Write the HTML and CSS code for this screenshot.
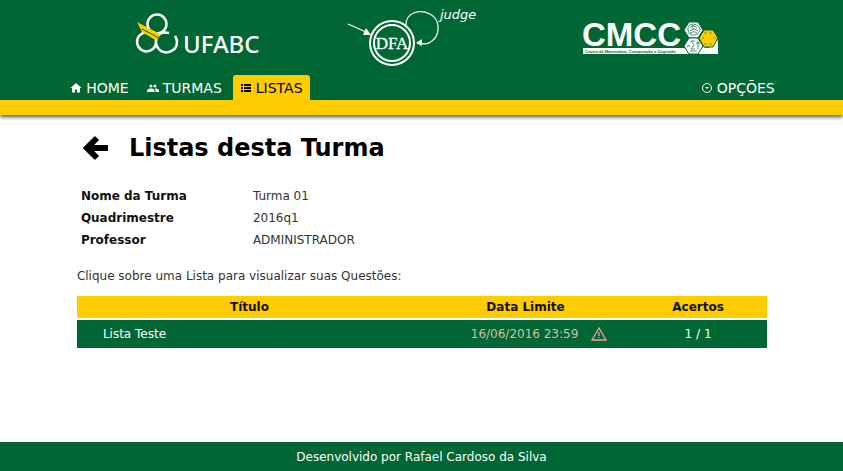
FILE: index.html
```html
<!DOCTYPE html>
<html lang="pt-BR">
<head>
<meta charset="utf-8">
<meta name="viewport" content="width=device-width, initial-scale=1">
<title>DFA judge - Listas</title>
<link rel="stylesheet" href="styles.css">
</head>
<body>
<header class="header">
  <div class="logos">
    <svg class="logo" width="128" height="51" viewBox="0 0 128 51" role="img" aria-label="UFABC">
      <g fill="none" stroke="#fff" stroke-width="2.500">
        <circle cx="23" cy="12" r="9.500"/>
        <path d="M16 21A9.500 9.500 0 1 0 22 31"/>
        <path d="M35 21C24 18 19 28 24 36C30 44 43 40 43 30Q43 27 41 24"/>
      </g>
      <path d="M3 10L26 22L23 29L8 20Z" fill="#fc0"/>
      <path d="M8 17L25 26" stroke="#063" stroke-width="1"/>
      <text class="ufabc" x="49" y="41">UFABC</text>
    </svg>
    <svg class="logo" width="157" height="68" viewBox="0 0 157 68" role="img" aria-label="DFA judge">
      <g fill="none" stroke="#fff">
        <circle cx="48" cy="39" r="22" stroke-width="2"/>
        <circle cx="48" cy="39" r="18" stroke-width="2"/>
        <path d="M4 20L22 28M62 21C62 8 76 5 86 10C97 16 96 31 88 37C83 41 79 40 74 39" stroke-width="1.200"/>
      </g>
      <path d="M27 31L19 31L22 24ZM72 39L78 35V42Z" fill="#fff"/>
      <text class="dfa" x="48" y="45">DFA</text>
      <text class="judge" x="96" y="15">judge</text>
    </svg>
    <svg class="logo" width="136" height="35" viewBox="0 0 136 35" role="img" aria-label="CMCC">
      <text class="cmcc" x="-1" y="26">CMCC</text>
      <path d="M0 28H101L110 32L120 27L125 28L135 20V34H0Z" fill="#fff"/>
      <text class="cmcc-sub" x="2" y="33">Centro de Matemática, Computação e Cognição</text>
      <g stroke="#063" stroke-width="1">
        <path d="M106 2H115L120 10L115 18H106L101 10Z" fill="#fff"/>
        <path d="M106 18H115L120 26L115 34H106L101 26Z" fill="#fff"/>
        <path d="M121 10H130L135 18L130 27H121L116 18Z" fill="#fc0"/>
      </g>
      <g fill="none" stroke="#063" stroke-width=".7">
        <path d="M105 10Q104 5 110 4Q117 5 117 10Q115 16 109 15Q105 14 105 10M107 8Q110 4 114 8M107 11Q111 7 115 11M107 13Q111 10 114 13M110 5V9"/>
        <path d="M104 27L106 25L107 27M112 21H108L111 25L108 29H112M113 23H117M115 21V29M107 31H114"/>
        <path d="M121 13H124M126 13H129M130 18H133M121 24H124M126 24H129M119 18H121" stroke-opacity=".7"/>
      </g>
    </svg>
  </div>
  <nav class="nav" aria-label="Principal">
    <a class="tab" href="#home"><svg width="12" height="12" viewBox="0 0 24 24" aria-hidden="true"><path fill="currentColor" d="M10 21V15H14V21H20V12H23L12 2L1 12H4V21Z"/></svg>HOME</a>
    <a class="tab" href="#turmas"><svg width="12" height="12" viewBox="0 0 24 24" aria-hidden="true"><path fill="currentColor" d="M16 11a3 3 0 1 0 0-6 3 3 0 0 0 0 6ZM8 11a3 3 0 1 0 0-6 3 3 0 0 0 0 6ZM8 13c-2.300 0-8 1.200-8 3.500V20H15V16.500C15 14.200 10.300 13 8 13ZM16 13h-1c1.200.8 2 2 2 3.500V20H24V16.500C24 14.200 18.300 13 16 13Z"/></svg>TURMAS</a>
    <a class="tab active" href="#listas" aria-current="page"><svg width="12" height="12" viewBox="0 0 12 12" aria-hidden="true"><path fill="currentColor" d="M1 2H3V4H1ZM1 5H3V7H1ZM1 8H3V10H1ZM4 2H11V4H4ZM4 5H11V7H4ZM4 8H11V10H4Z"/></svg>LISTAS</a>
    <a class="tab options" href="#opcoes"><svg width="12" height="12" viewBox="0 0 12 12" aria-hidden="true"><circle cx="6" cy="6" r="4.500" fill="none" stroke="currentColor"/><path fill="currentColor" d="M4 5H8L6 7Z"/></svg>OPÇÕES</a>
  </nav>
</header>
<main class="content">
  <div class="heading">
    <a class="back" href="#turmas" aria-label="Voltar"><svg width="26" height="26" viewBox="0 0 26 26" aria-hidden="true"><path d="M25 13H5M14 3L4 13L14 23" fill="none" stroke="#000" stroke-width="6"/></svg></a>
    <h1>Listas desta Turma</h1>
  </div>
  <dl class="details">
    <dt>Nome da Turma</dt><dd>Turma 01</dd>
    <dt>Quadrimestre</dt><dd>2016q1</dd>
    <dt>Professor</dt><dd>ADMINISTRADOR</dd>
  </dl>
  <p class="hint">Clique sobre uma Lista para visualizar suas Questões:</p>
  <table class="lists">
    <thead><tr><th class="title" scope="col">Título</th><th class="date" scope="col">Data Limite</th><th scope="col">Acertos</th></tr></thead>
    <tbody><tr><td class="name">Lista Teste</td><td class="deadline"><div class="due">16/06/2016 23:59<svg width="18" height="16" viewBox="0 0 18 16" role="img" aria-label="Prazo encerrado"><path d="M9 2L16 14H2ZM9 6V10M9 11V12" fill="none" stroke="currentColor" stroke-width="1.300"/></svg></div></td><td>1 / 1</td></tr></tbody>
  </table>
</main>
<footer class="footer">Desenvolvido por Rafael Cardoso da Silva</footer>
</body>
</html>
```
FILE: styles.css
```css
* { box-sizing: border-box; }
body {
  margin: 0;
  min-height: 100vh;
  display: flex;
  flex-direction: column;
  background: #fff;
  color: #333;
  font: 12px/18px Verdana, "DejaVu Sans", sans-serif;
}
.header {
  background: #063;
  border-bottom: 15px solid #fc0;
  box-shadow: 0 2px 4px rgba(0, 0, 0, .7);
}
.logos {
  display: flex;
  justify-content: space-between;
  align-items: center;
  height: 75px;
  width: 71%;
  margin: 0 auto;
  padding: 0 2px 0 12px;
}
.logo { display: block; overflow: visible; }
.logo text { fill: #fff; }
.logo .ufabc { font: 500 24px "Noto Sans", sans-serif; }
.logo .dfa { font: 17px "Liberation Serif", serif; text-anchor: middle; stroke: #fff; stroke-width: .3; }
.logo .judge { font: italic 13px "DejaVu Sans", sans-serif; }
.logo .cmcc { font: bold 33px "Liberation Sans", sans-serif; }
.logo .cmcc-sub { font: bold 4px "Liberation Sans", sans-serif; fill: #063; }
.nav {
  display: flex;
  gap: 4px;
  width: 85%;
  margin: 0 auto;
  padding-right: 5px;
}
.tab {
  display: flex;
  align-items: center;
  gap: 4px;
  height: 25px;
  padding: 0 7px;
  border-radius: 3px 3px 0 0;
  color: #fff;
  font-size: 14px;
  text-decoration: none;
}
.options { margin-left: auto; padding: 0; }
.active { background: #fc0; color: #000; }
.content {
  flex: 1;
  width: 82%;
  margin: 0 auto;
  padding-left: 1px;
}
.heading {
  display: flex;
  align-items: center;
  gap: 20px;
  padding: 17px 0 0 6px;
}
.back { display: flex; }
h1 {
  margin: 0;
  color: #000;
  font-size: 24px;
  line-height: 32px;
}
.details {
  display: grid;
  grid-template-columns: 172px 1fr;
  row-gap: 4px;
  margin: 23px 0 18px;
  padding: 0 4px;
}
dt { color: #111; font-weight: bold; }
dd { margin: 0; }
.hint { margin: 0 0 11px; }
.lists {
  width: 100%;
  table-layout: fixed;
  border-collapse: collapse;
}
.title { width: 50%; }
.date { width: 30%; }
th {
  height: 23px;
  padding: 0;
  background: #fc0;
  border-bottom: 2px solid #fff;
  color: #111;
}
td {
  height: 29px;
  padding: 0;
  background: #063;
  color: #fff;
  text-align: center;
}
.lists .name { padding-left: 26px; text-align: left; }
.lists .deadline { color: #dba; }
.due {
  display: flex;
  align-items: center;
  justify-content: center;
  gap: 12px;
  padding-left: 28px;
}
.due svg { color: #f99; }
.footer {
  padding: 6px 0 5px;
  background: #063;
  color: #fff;
  text-align: center;
}
```
